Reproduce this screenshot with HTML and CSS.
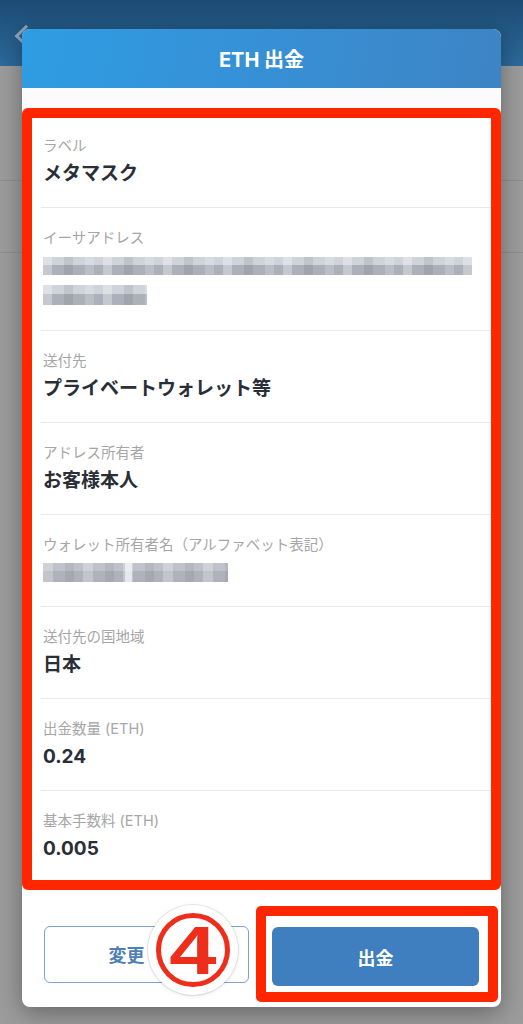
FILE: index.html
```html
<!DOCTYPE html>
<html lang="ja">

<head>
    <meta charset="utf-8">
    <title>ETH 出金</title>
    <link rel="stylesheet" href="styles.css">
</head>

<body>
    <!-- dimmed page behind the dialog -->
    <div class="page">
        <div class="appbar"><span class="back"></span></div>
        <div class="page-line first"></div>
        <div class="page-line second"></div>
    </div>

    <div class="modal">
        <div class="modal-head">ETH 出金</div>

        <div class="modal-body">
            <div class="mark-box">
                <div class="field">
                    <div class="field-label">ラベル</div>
                    <div class="field-value">メタマスク</div>
                </div>
                <div class="field field-addr">
                    <div class="field-label">イーサアドレス</div>
                    <div class="mosaic mosaic-line1"></div>
                    <div class="mosaic mosaic-line2"></div>
                </div>
                <div class="field">
                    <div class="field-label">送付先</div>
                    <div class="field-value">プライベートウォレット等</div>
                </div>
                <div class="field">
                    <div class="field-label">アドレス所有者</div>
                    <div class="field-value">お客様本人</div>
                </div>
                <div class="field field-name">
                    <div class="field-label">ウォレット所有者名（アルファベット表記）</div>
                    <div class="mosaic mosaic-name"></div>
                </div>
                <div class="field">
                    <div class="field-label">送付先の国地域</div>
                    <div class="field-value">日本</div>
                </div>
                <div class="field">
                    <div class="field-label">出金数量 (ETH)</div>
                    <div class="field-value">0.24</div>
                </div>
                <div class="field">
                    <div class="field-label">基本手数料 (ETH)</div>
                    <div class="field-value">0.005</div>
                </div>
            </div>
        </div>

        <div class="modal-foot">
            <button class="btn btn-outline">変更</button>
            <div class="mark-btn">
                <button class="btn btn-primary">出金</button>
            </div>
            <!-- step marker drawn over the buttons -->
            <div class="step">
                <div class="step-ring"><span class="step-num">4</span></div>
            </div>
        </div>
    </div>
</body>

</html>
```

FILE: styles.css
```css
/* Page */
body {
    margin: 0;
    height: 1024px;
    overflow: hidden;
    position: relative;
    font-family: "Inter", "Noto Sans CJK JP", sans-serif;
    background-color: #9c9c9c; /* dimmed page */
}

.appbar {
    height: 66px;
    padding-top: 1px;
    box-sizing: border-box;
    background: linear-gradient(#1c4b72, #2b6b9c);
}

.back {
    display: block;
    width: 13px;
    height: 13px;
    margin: 27px 0 0 18px;
    border-left: 3px solid #8ea5ba;
    border-bottom: 3px solid #8ea5ba;
    transform: rotate(45deg);
}

.page-line {
    height: 1px;
    background-color: #8f8f8f;
}

.page-line.first {
    margin-top: 114px;
}

.page-line.second {
    margin-top: 71px;
}

/* Dialog */
.modal {
    position: absolute;
    top: 29px;
    left: 22px;
    width: 479px;
    background-color: #ffffff;
    border-radius: 8px;
    box-shadow: 0 6px 24px rgba(0, 0, 0, 0.35);
}

.modal-head {
    height: 59px;
    display: flex;
    align-items: center;
    justify-content: center;
    color: #ffffff;
    font-size: 20px;
    font-weight: 700;
    border-radius: 8px 8px 0 0;
    background: linear-gradient(100deg, #2e9de2 0%, #3790d6 50%, #3d84c4 100%);
}

.modal-body {
    padding-top: 20px;
    background-color: #fbfbfb;
}

/* red annotation frame */
.mark-box {
    border: 10px solid #ff2600;
    border-radius: 6px;
    background-color: #ffffff;
}

.field {
    margin-left: 9px;
    padding: 21px 0 20px 2px;
    border-top: 1px solid #e9e9e9;
}

.field:first-child {
    border-top: 0;
    padding-top: 19px;
}

.field:last-child {
    padding-bottom: 18px;
}

.field-addr {
    padding-bottom: 25px;
}

.field-name {
    padding-bottom: 24px;
}

.field-label {
    font-size: 14.5px;
    line-height: 18px;
    color: #a6a6a6;
}

.field-value {
    margin-top: 6px;
    font-size: 19px;
    line-height: 26px;
    font-weight: 700;
    color: #2a2e37;
}

/* blurred (pixelated) values */
.mosaic {
    background:
        repeating-linear-gradient(90deg, rgba(255, 255, 255, 0.3) 0 9px, transparent 9px 21px, rgba(0, 0, 0, 0.07) 21px 30px, transparent 30px 42px, rgba(255, 255, 255, 0.18) 42px 51px, transparent 51px 60px),
        linear-gradient(#d0d3da 0 45%, #acb0ba 45% 100%);
}

.mosaic-line1 {
    width: 429px;
    height: 18px;
    margin-top: 10px;
}

.mosaic-line2 {
    width: 104px;
    height: 20px;
    margin-top: 10px;
}

.mosaic-name {
    width: 185px;
    height: 19px;
    margin-top: 9px;
    background:
        linear-gradient(90deg, transparent 0 82px, rgba(255, 255, 255, 0.6) 82px 89px, transparent 89px),
        repeating-linear-gradient(90deg, rgba(255, 255, 255, 0.25) 0 10px, transparent 10px 22px, rgba(0, 0, 0, 0.06) 22px 31px, transparent 31px 40px),
        linear-gradient(#bfc2ca 0 40%, #aeb2bb 40% 100%);
}

/* Footer buttons */
.modal-foot {
    position: relative;
    display: flex;
    align-items: center;
    gap: 7px;
    padding: 16px 3px 5px 22px;
}

.btn {
    font-family: inherit;
    font-size: 18px;
    font-weight: 700;
    border-radius: 6px;
    cursor: pointer;
}

.btn-outline {
    width: 205px;
    height: 57px;
    padding: 0 40px 0 0;
    background-color: #ffffff;
    border: 1.5px solid #7ba3cc;
    color: #4f80b4;
}

.mark-btn {
    border: 10px solid #ff2600;
    border-radius: 5px;
    padding: 11px 9px 6px 6px;
}

.btn-primary {
    display: block;
    width: 207px;
    height: 59px;
    border: 0;
    background-color: #3f7fbf;
    color: #ffffff;
}

/* circled step number */
.step {
    position: absolute;
    left: 126px;
    top: 15px;
    width: 90px;
    height: 90px;
    border-radius: 50%;
    background-color: #ffffff;
    box-shadow: 0 0 0 1px rgba(0, 0, 0, 0.08), 0 1px 4px rgba(0, 0, 0, 0.1);
    display: flex;
    align-items: center;
    justify-content: center;
}

.step-ring {
    width: 64px;
    height: 64px;
    border: 5px solid #ee2d1b;
    border-radius: 50%;
    display: flex;
    align-items: center;
    justify-content: center;
}

.step-num {
    display: inline-block;
    font-family: "Liberation Sans", sans-serif;
    font-size: 68px;
    line-height: 1;
    font-weight: 700;
    color: #ee2d1b;
    transform: scaleX(1.25);
    margin-top: 0;
}
```
